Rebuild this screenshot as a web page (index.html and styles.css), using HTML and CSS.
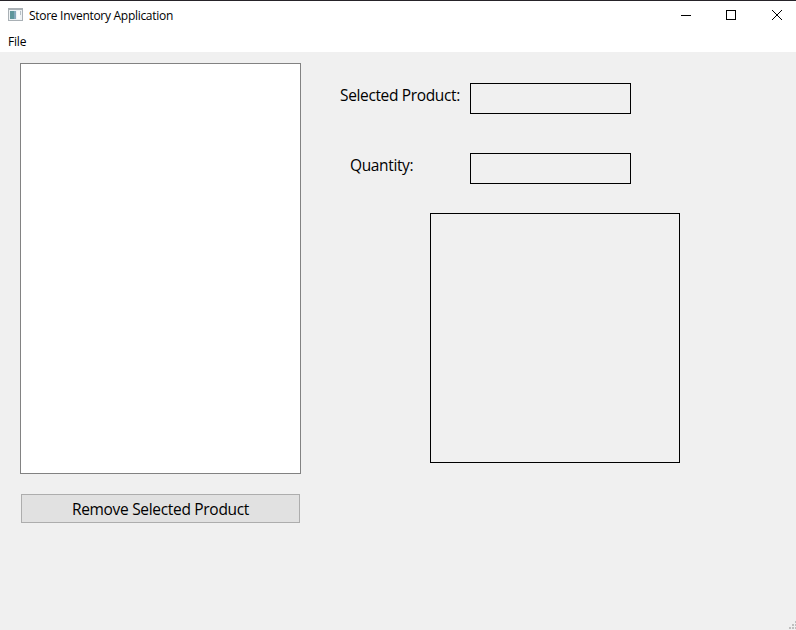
FILE: index.html
```html
<!DOCTYPE html>
<html lang="en">
<head>
<meta charset="utf-8">
<title>Store Inventory Application</title>
<link rel="stylesheet" href="styles.css">
</head>
<body>
<div class="window">
  <header class="titlebar">
    <svg class="app-icon" width="15" height="13" viewBox="0 0 15 13" shape-rendering="crispEdges">
      <rect width="15" height="13" fill="#a9b0b5"/>
      <rect x="1" y="2" width="13" height="10" fill="#eef2f4"/>
      <rect x="2" y="3" width="6" height="8" fill="#5f969b"/>
      <rect x="6" y="3" width="2" height="8" fill="#86a9bc"/>
      <rect x="9" y="3" width="3" height="8" fill="#fbfbfb"/>
      <rect x="12" y="3" width="1" height="4" fill="#b6bfc5"/>
    </svg>
    <span class="title"><span>Store Inventory Application</span></span>
    <div class="controls">
      <svg width="46" height="30" viewBox="0 0 46 30"><path d="M18 14.5h10" stroke="#000" fill="none"/></svg>
      <svg width="46" height="30" viewBox="0 0 46 30"><rect x="17.5" y="9.5" width="9" height="9" stroke="#000" fill="none"/></svg>
      <svg width="46" height="30" viewBox="0 0 46 30"><path d="M17 9l10 10M27 9L17 19" stroke="#000" fill="none"/></svg>
    </div>
  </header>
  <nav class="menubar"><span>File</span></nav>
  <main class="content">
    <section class="products">
      <div class="list"></div>
      <button class="remove"><span>Remove Selected Product</span></button>
    </section>
    <section class="details">
      <div class="row"><label class="label"><span>Selected Product:</span></label><div class="field"></div></div>
      <div class="row"><label class="label quantity"><span>Quantity:</span></label><div class="field"></div></div>
      <div class="preview"></div>
    </section>
  </main>
  <svg class="grip" width="7" height="8" viewBox="0 0 7 8" fill="#bfbfbf" shape-rendering="crispEdges">
    <path d="M6 0h2v2h-2zM3 3h2v2h-2zM6 3h2v2h-2zM0 6h2v2h-2zM3 6h2v2h-2zM6 6h2v2h-2z"/>
  </svg>
</div>
</body>
</html>
```
FILE: styles.css
```css
* { box-sizing: border-box; }
body { margin: 0; font-family: "Open Sans", "Noto Sans", sans-serif; color: #000; }
.window { position: relative; width: 796px; height: 630px; background: #f0f0f0; overflow: hidden; display: flex; flex-direction: column; }
.titlebar { height: 31px; flex: none; background: #fff; border-top: 1px solid #262329; display: flex; }
.app-icon { margin: 7px 6px 0 8px; }
.title { flex: 1; font-size: 12px; line-height: 30px; letter-spacing: -0.29px; white-space: nowrap; }
.controls { display: flex; width: 133px; }
.controls svg { flex: none; }
.menubar { height: 21px; flex: none; background: #fff; padding-left: 8px; font-size: 12px; line-height: 22px; letter-spacing: -0.2px; }
.content { display: flex; padding: 11px 0 0 20px; }
.products { width: 281px; }
.list { height: 411px; border: 1px solid #828282; background: #fff; }
.remove { display: block; width: 279px; height: 29px; margin: 20px 1px 0; padding: 0; border: 1px solid #adadad; background: #e1e1e1; font: 15.5px/29px "Open Sans", "Noto Sans", sans-serif; letter-spacing: -0.31px; color: #000; }
.details { margin-left: 39px; padding-top: 20px; }
.row { display: flex; height: 31px; margin-bottom: 39px; }
.label { width: 130px; font-size: 15.5px; line-height: 24px; letter-spacing: -0.36px; white-space: nowrap; }
.quantity { padding-left: 10px; }
.field { width: 161px; height: 31px; border: 1px solid #000; }
.preview { width: 250px; height: 250px; margin: -10px 0 0 90px; border: 1px solid #000; }
.grip { position: absolute; right: 0; bottom: 1px; }
```
